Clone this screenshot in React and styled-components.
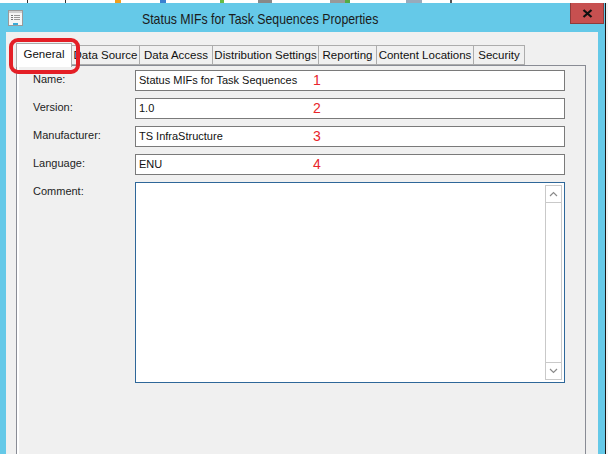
import styled, { createGlobalStyle } from 'styled-components';

const GlobalStyle = createGlobalStyle`
  html, body {
    margin: 0;
    padding: 0;
    overflow: hidden;
    background: #ffffff;
  }
`;

const Screen = styled.div`
  width: 608px;
  height: 454px;
  display: flex;
  flex-direction: column;
  overflow: hidden;
  font-family: 'Liberation Sans', Arial, sans-serif;
`;

const BehindStrip = styled.div`
  height: 3px;
  flex: none;
  background: linear-gradient(
    to right,
    #fff 0 27px, #333 27px 28px, #fff 28px 65px, #333 65px 66px,
    #fff 66px 115px, #f0a020 115px 121px, #fff 121px 160px, #3a80d0 160px 166px,
    #fff 166px 220px, #66bb44 220px 224px, #fff 224px 258px, #888 258px 272px,
    #fff 272px 330px, #999 330px 345px, #55aa44 345px 350px, #fff 350px 406px,
    #9ab 406px 422px, #fff 422px 450px, #555 450px 452px, #fff 452px
  );
`;

const Body = styled.div`
  flex: 1;
  display: flex;
  min-height: 0;
`;

const Window = styled.div`
  width: 605px;
  background: #65c9e8;
  display: flex;
  flex-direction: column;
  padding: 0 7px 0 6px;
  box-sizing: border-box;
`;

const RightEdge = styled.div`
  flex: 1;
  border-left: 1px solid #1a1a1a;
  background: #f4f4f4;
`;

const TitleBar = styled.div`
  height: 29px;
  display: flex;
  align-items: center;
  position: relative;
`;

const Title = styled.div`
  margin-left: 119px;
  font-size: 15px;
  color: #1b1b1b;
  white-space: nowrap;
  transform: scaleX(0.82);
  transform-origin: left center;
  padding-top: 1px;
`;

const CloseButton = styled.div`
  position: absolute;
  right: -6px;
  top: 0;
  width: 32px;
  height: 20px;
  background: #c75050;
  border: 1px solid #8e3b3b;
  border-top: none;
  display: flex;
  align-items: center;
  justify-content: center;
`;

const Client = styled.div`
  flex: 1;
  background: #f0f0f0;
  position: relative;
  padding: 11px 12px 0 10px;
  display: flex;
  flex-direction: column;
`;

const Highlight = styled.div`
  position: absolute;
  left: 3px;
  top: 6px;
  width: 71px;
  height: 36px;
  box-sizing: border-box;
  border: 4px solid #e41f26;
  border-radius: 9px;
  z-index: 3;
`;

const TabRow = styled.div`
  display: flex;
  align-items: flex-end;
  height: 22px;
  padding-left: 1px;
  position: relative;
  z-index: 2;
`;

const Tab = styled.div`
  box-sizing: border-box;
  width: ${(p) => p.$w}px;
  height: ${(p) => (p.$active ? '24px' : '20px')};
  margin-bottom: ${(p) => (p.$active ? '-2px' : '0')};
  padding-top: ${(p) => (p.$active ? '4px' : '3px')};
  border: 1px solid #acacac;
  border-bottom: ${(p) => (p.$active ? 'none' : '1px solid #acacac')};
  background: ${(p) => (p.$active ? '#ffffff' : '#f0f0f0')};
  font-size: 11.5px;
  color: #111;
  text-align: center;
  white-space: nowrap;
  margin-left: -1px;
`;

const Panel = styled.div`
  flex: 1;
  border: 1px solid #898c95;
  border-bottom: none;
  box-shadow: inset 2px 0 0 #ffffff;
  padding: 4px 0 0 16px;
  display: grid;
  grid-template-columns: 102px 430px;
  grid-auto-rows: 21px;
  row-gap: 7px;
  align-content: start;
`;

const Label = styled.div`
  font-size: 11px;
  color: #1e1e1e;
  padding-top: 3px;
`;

const Field = styled.div`
  box-sizing: border-box;
  border: 1px solid #7a7a7a;
  background: #ffffff;
  font-size: 11px;
  color: #111;
  padding: 3px 0 0 3px;
  position: relative;
`;

const Marker = styled.span`
  position: absolute;
  left: 177px;
  top: 1px;
  color: #e8252b;
  font-size: 14px;
`;

const CommentBox = styled.div`
  height: 201px;
  box-sizing: border-box;
  border: 1px solid #2e6799;
  background: #ffffff;
  display: flex;
  justify-content: flex-end;
  padding: 2px 2px 2px 0;
`;

const ScrollBar = styled.div`
  width: 17px;
  border: 1px solid #c9c9c9;
  display: flex;
  flex-direction: column;
  justify-content: space-between;
  box-sizing: border-box;
`;

const ScrollButton = styled.div`
  height: 16px;
  display: flex;
  align-items: center;
  justify-content: center;
  border-${(p) => (p.$up ? 'bottom' : 'top')}: 1px solid #c9c9c9;
`;

const DocIcon = () => (
  <svg width="15" height="16" viewBox="0 0 15 16" style={{ marginLeft: 2 }}>
    <rect x="0.5" y="0.5" width="14" height="15" fill="#f6f6f6" stroke="#9a9a9a" />
    <rect x="1" y="1" width="13" height="2" fill="#d0d0d0" />
    <rect x="3" y="5" width="2" height="1" fill="#777" />
    <rect x="6" y="5" width="6" height="1" fill="#999" />
    <rect x="3" y="7" width="2" height="1" fill="#777" />
    <rect x="6" y="7" width="6" height="1" fill="#999" />
    <rect x="3" y="9" width="2" height="1" fill="#777" />
    <rect x="6" y="9" width="6" height="1" fill="#999" />
    <rect x="5" y="13" width="5" height="2" fill="#3aaad8" />
  </svg>
);

const Arrow = ({ up }) => (
  <svg width="9" height="6" viewBox="0 0 9 6">
    <path
      d={up ? 'M1 5 L4.5 1.5 L8 5' : 'M1 1 L4.5 4.5 L8 1'}
      fill="none"
      stroke="#8a8a8a"
      strokeWidth="1.2"
    />
  </svg>
);

const tabs = [
  { t: 'General', w: 56 },
  { t: 'Data Source', w: 69 },
  { t: 'Data Access', w: 74 },
  { t: 'Distribution Settings', w: 107 },
  { t: 'Reporting', w: 59 },
  { t: 'Content Locations', w: 98 },
  { t: 'Security', w: 52 },
];

const fields = [
  { label: 'Name:', value: 'Status MIFs for Task Sequences', n: 1 },
  { label: 'Version:', value: '1.0', n: 2 },
  { label: 'Manufacturer:', value: 'TS InfraStructure', n: 3 },
  { label: 'Language:', value: 'ENU', n: 4 },
];

export default function App() {
  return (
    <>
      <GlobalStyle />
      <Screen>
        <BehindStrip />
        <Body>
          <Window>
            <TitleBar>
              <DocIcon />
              <Title>Status MIFs for Task Sequences Properties</Title>
              <CloseButton>
                <svg width="11" height="9" viewBox="0 0 11 9">
                  <path d="M1.5 1 L9.5 8 M9.5 1 L1.5 8" stroke="#111" strokeWidth="2.2" />
                </svg>
              </CloseButton>
            </TitleBar>
            <Client>
              <Highlight />
              <TabRow>
                {tabs.map((tab, i) => (
                  <Tab key={tab.t} $w={tab.w} $active={i === 0}>
                    {tab.t}
                  </Tab>
                ))}
              </TabRow>
              <Panel>
                {fields.map((f) => [
                  <Label key={f.label + 'l'}>{f.label}</Label>,
                  <Field key={f.label + 'f'}>
                    {f.value}
                    <Marker>{f.n}</Marker>
                  </Field>,
                ])}
                <Label>Comment:</Label>
                <CommentBox>
                  <ScrollBar>
                    <ScrollButton $up>
                      <Arrow up />
                    </ScrollButton>
                    <ScrollButton>
                      <Arrow />
                    </ScrollButton>
                  </ScrollBar>
                </CommentBox>
              </Panel>
            </Client>
          </Window>
          <RightEdge />
        </Body>
      </Screen>
    </>
  );
}
